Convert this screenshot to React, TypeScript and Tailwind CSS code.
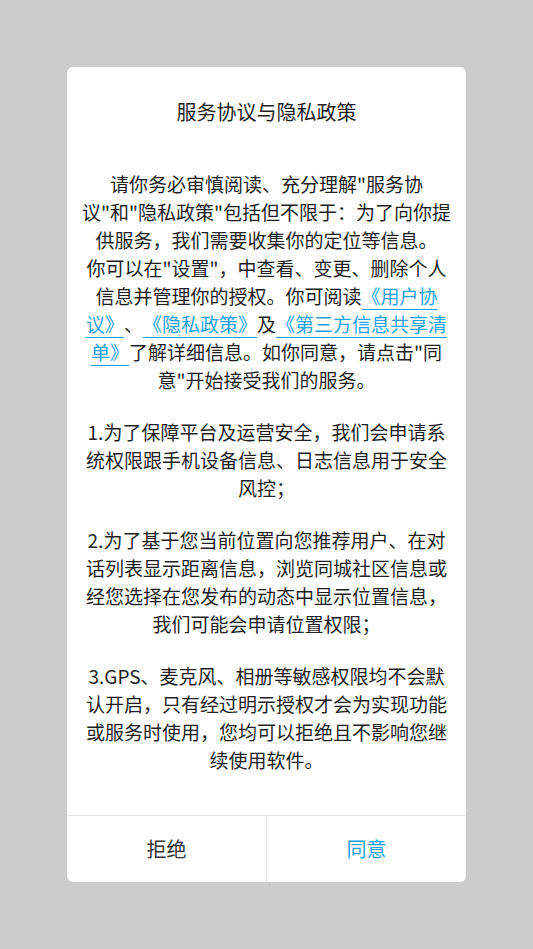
import React from "react";

const Link = ({ children }: { children: React.ReactNode }) => (
  <a className="text-[#1ea1e8] underline decoration-1 underline-offset-[5px]">{children}</a>
);

const B = ({ children }: { children: React.ReactNode }) => (
  <span className="font-['Noto_Sans_CJK_JP',sans-serif]">{children}</span>
);

export default function App() {
  const font = { fontFamily: '"Noto Sans CJK SC", "Noto Sans", sans-serif' };
  return (
    <div
      className="flex h-[949px] w-full items-center justify-center bg-[#cccccc] [text-spacing-trim:space-all]"
      style={font}
    >
      <div className="flex w-[399px] flex-col overflow-hidden rounded-md bg-white">
        <div className="flex flex-col items-center px-2 pb-[41px] pt-[31px] text-center text-[#1f1f1f]">
          <h1 className="text-[20px] leading-[28px]">服务协议与隐私政策</h1>
          <div className="mt-[44px] flex flex-col gap-[24px] whitespace-nowrap text-[19px] leading-[28px]">
            <p>
              请你务必审慎阅读、充分理解"服务协
              <br />
              议"和"隐私政策"包括但不限于：为了向你提
              <br />
              供服务，我们需要收集你的定位等信息。
              <br />
              你可以在"设置"，中查看、变更、删除个人
              <br />
              信息并管理你的授权。你可阅读<Link><B>《</B>用户协</Link>
              <br />
              <Link>议<B>》</B></Link>、<Link><B>《</B>隐私政策<B>》</B></Link>及<Link><B>《</B>第三方信息共享清</Link>
              <br />
              <Link>单<B>》</B></Link>了解详细信息。如你同意，请点击"同
              <br />
              意"开始接受我们的服务。
            </p>
            <p>
              1.为了保障平台及运营安全，我们会申请系
              <br />
              统权限跟手机设备信息、日志信息用于安全
              <br />
              风控；
            </p>
            <p>
              2.为了基于您当前位置向您推荐用户、在对
              <br />
              话列表显示距离信息，浏览同城社区信息或
              <br />
              经您选择在您发布的动态中显示位置信息，
              <br />
              我们可能会申请位置权限；
            </p>
            <p>
              3.GPS、麦克风、相册等敏感权限均不会默
              <br />
              认开启，只有经过明示授权才会为实现功能
              <br />
              或服务时使用，您均可以拒绝且不影响您继
              <br />
              续使用软件。
            </p>
          </div>
        </div>
        <div className="flex h-[67px] border-t border-[#e6e6e6]">
          <button className="flex flex-1 items-center justify-center border-r border-[#e6e6e6] text-[20px] text-[#333333]">
            拒绝
          </button>
          <button className="flex flex-1 items-center justify-center text-[20px] text-[#1ea1e8]">
            同意
          </button>
        </div>
      </div>
    </div>
  );
}
